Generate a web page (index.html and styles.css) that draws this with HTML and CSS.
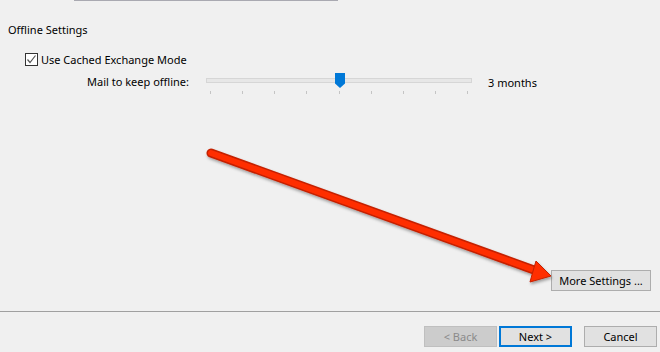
FILE: index.html
```html
<!DOCTYPE html>
<html lang="en">
<head>
  <meta charset="UTF-8">
  <title>Offline Settings</title>
  <link rel="stylesheet" href="styles.css">
</head>
<body>

  <div class="page">
    <div class="top-rule"></div>

    <div class="content">
      <div class="group-title">Offline Settings</div>

      <label class="check-row">
        <span class="checkbox">
          <svg width="11" height="11" viewBox="0 0 11 11"><polyline points="1.5,5.5 4,8.5 9.5,1.5" fill="none" stroke="#555" stroke-width="1.2"/></svg>
        </span>
        Use Cached Exchange Mode
      </label>

      <div class="slider-row">
        <div class="slider-label">Mail to keep offline:</div>
        <div class="slider">
          <div class="track"></div>
          <div class="thumb"></div>
          <div class="ticks">
            <i></i><i></i><i></i><i></i><i></i><i></i><i></i><i></i><i></i>
          </div>
        </div>
        <div class="slider-value">3 months</div>
      </div>

      <div class="more-row">
        <button class="btn more">More Settings ...</button>
      </div>
    </div>

    <div class="separator"></div>

    <div class="footer">
      <button class="btn back" disabled>&lt; Back</button>
      <button class="btn next">Next &gt;</button>
      <button class="btn cancel">Cancel</button>
    </div>

    <!-- callout arrow drawn over the dialog -->
    <svg class="callout" width="660" height="352" viewBox="0 0 660 352">
      <defs>
        <filter id="shadow" x="-10%" y="-10%" width="120%" height="130%">
          <feDropShadow dx="1" dy="2" stdDeviation="1.5" flood-color="#000" flood-opacity="0.35"/>
        </filter>
      </defs>
      <g filter="url(#shadow)">
        <line x1="211" y1="153" x2="534" y2="270" stroke="#c42000" stroke-width="9" stroke-linecap="round"/>
        <line x1="211" y1="153" x2="534" y2="270" stroke="#ff2e05" stroke-width="6" stroke-linecap="round"/>
        <polygon points="536,261 551,276 530,282 533,271" fill="#ff2e05" stroke="#c42000" stroke-width="1" stroke-linejoin="round"/>
      </g>
    </svg>
  </div>

</body>
</html>
```

FILE: styles.css
```css
body {
  margin: 0;
  background: #f0f0f0;
  font-family: "Noto Sans", "Open Sans", sans-serif;
  font-size: 11px;
  color: #000;
}

.page {
  position: relative;
  height: 352px;
  display: flex;
  flex-direction: column;
}

.top-rule {
  margin-left: 74px;
  width: 264px;
  height: 1px;
  background: #a9a9b1;
}

.content {
  flex: 1;
  display: flex;
  flex-direction: column;
}

.group-title {
  margin: 21px 0 0 8px;
  line-height: 16px;
}

.check-row {
  display: flex;
  align-items: center;
  margin: 15px 0 0 25px;
  height: 13px;
  line-height: 13px;
}

.checkbox {
  width: 11px;
  height: 11px;
  border: 1px solid #333;
  background: #fff;
  margin-right: 3px;
  display: flex;
}

.slider-row {
  display: flex;
  margin-top: 6px;
  height: 24px;
}

.slider-label {
  width: 189px;
  text-align: right;
  padding-top: 2px;
  line-height: 16px;
}

.slider {
  position: relative;
  width: 266px;
  margin-left: 17px;
}

.track {
  margin-top: 6px;
  height: 3px;
  border: 1px solid #d6d6d6;
  background: #e7e7e7;
}

.thumb {
  position: absolute;
  left: 129px;
  top: 1px;
  width: 10px;
  height: 15px;
  background: #0078d7;
  clip-path: polygon(0 0, 100% 0, 100% 70%, 50% 100%, 0 70%);
}

.ticks {
  display: flex;
  justify-content: space-between;
  margin: 8px 0 0 4px;
  width: 258px;
}

.ticks i {
  width: 1px;
  height: 3px;
  background: #c4c4c4;
}

.slider-value {
  margin-left: 16px;
  padding-top: 3px;
  line-height: 16px;
}

.more-row {
  margin-top: auto;
  margin-bottom: 20px;
  display: flex;
  justify-content: flex-end;
  padding-right: 9px;
}

.btn {
  box-sizing: border-box;
  height: 21px;
  font-family: inherit;
  font-size: 11px;
  color: #000;
  background: #e1e1e1;
  border: 1px solid #adadad;
  padding: 0;
}

.more {
  width: 100px;
}

.separator {
  height: 1px;
  background: #a0a0a0;
}

.footer {
  height: 40px;
  box-sizing: border-box;
  padding: 14px 3px 0 0;
  display: flex;
  justify-content: flex-end;
  align-items: flex-start;
}

.back,
.next,
.cancel {
  width: 73px;
}

.back {
  background: #cccccc;
  border-color: #bfbfbf;
  color: #8a8a8a;
}

.next {
  margin-left: 2px;
  border: 2px solid #0078d7;
}

.cancel {
  margin-left: 12px;
}

.callout {
  position: absolute;
  top: 0;
  left: 0;
  pointer-events: none;
}
```
